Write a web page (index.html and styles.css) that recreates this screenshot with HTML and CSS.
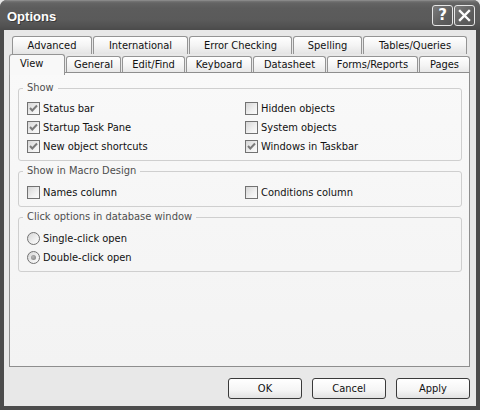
FILE: index.html
```html
<!DOCTYPE html>
<html>
<head>
<meta charset="utf-8">
<title>Options</title>
<link rel="stylesheet" href="styles.css">
</head>
<body>
<div class="window">
  <div class="titlebar">
    <span class="title">Options</span>
    <div class="tbtns">
      <span class="tbtn help">?</span>
      <span class="tbtn close"><svg width="19" height="19" viewBox="0 0 19 19"><path d="M5 5 L14 14 M14 5 L5 14" stroke="#fff" stroke-width="2.4" stroke-linecap="square"/></svg></span>
    </div>
  </div>
  <div class="client">
    <div class="tabs">
      <div class="tabrow row1">
        <div class="tab">Advanced</div>
        <div class="tab">International</div>
        <div class="tab">Error Checking</div>
        <div class="tab">Spelling</div>
        <div class="tab">Tables/Queries</div>
      </div>
      <div class="tabrow row2">
        <div class="tab sel">View</div>
        <div class="tab">General</div>
        <div class="tab">Edit/Find</div>
        <div class="tab">Keyboard</div>
        <div class="tab">Datasheet</div>
        <div class="tab">Forms/Reports</div>
        <div class="tab">Pages</div>
      </div>
    </div>
    <div class="panel">
      <fieldset class="group">
        <legend>Show</legend>
        <div class="cols">
          <div class="opt"><span class="cb checked"><svg width="11" height="11" viewBox="0 0 11 11"><path d="M2 5 L4.3 7.5 L9 2.5" fill="none" stroke="#7a7a7a" stroke-width="2"/></svg></span>Status bar</div>
          <div class="opt"><span class="cb"></span>Hidden objects</div>
          <div class="opt"><span class="cb checked"><svg width="11" height="11" viewBox="0 0 11 11"><path d="M2 5 L4.3 7.5 L9 2.5" fill="none" stroke="#7a7a7a" stroke-width="2"/></svg></span>Startup Task Pane</div>
          <div class="opt"><span class="cb"></span>System objects</div>
          <div class="opt"><span class="cb checked"><svg width="11" height="11" viewBox="0 0 11 11"><path d="M2 5 L4.3 7.5 L9 2.5" fill="none" stroke="#7a7a7a" stroke-width="2"/></svg></span>New object shortcuts</div>
          <div class="opt"><span class="cb checked"><svg width="11" height="11" viewBox="0 0 11 11"><path d="M2 5 L4.3 7.5 L9 2.5" fill="none" stroke="#7a7a7a" stroke-width="2"/></svg></span>Windows in Taskbar</div>
        </div>
      </fieldset>
      <fieldset class="group macro">
        <legend>Show in Macro Design</legend>
        <div class="cols">
          <div class="opt"><span class="cb"></span>Names column</div>
          <div class="opt"><span class="cb"></span>Conditions column</div>
        </div>
      </fieldset>
      <fieldset class="group click">
        <legend>Click options in database window</legend>
        <div class="opt"><span class="rb"></span>Single-click open</div>
        <div class="opt"><span class="rb on"></span>Double-click open</div>
      </fieldset>
    </div>
    <div class="buttons">
      <button class="btn">OK</button>
      <button class="btn">Cancel</button>
      <button class="btn">Apply</button>
    </div>
  </div>
</div>
</body>
</html>
```

FILE: styles.css
```css
html, body {
  margin: 0;
  padding: 0;
  background: #e6e6e6;
}
body {
  font-family: "DejaVu Sans Condensed", "DejaVu Sans", sans-serif;
  font-size: 11px;
  color: #111;
}
.window {
  width: 480px;
  height: 410px;
  box-sizing: border-box;
  background: #4c4c4c;
  border-radius: 7px 7px 0 0;
  padding: 0 4px 4px;
  display: flex;
  flex-direction: column;
}
.titlebar {
  height: 30px;
  flex: none;
  margin: 0 -4px;
  padding: 0 5px 0 7px;
  border-radius: 7px 7px 0 0;
  background: linear-gradient(#9a9a9a 0, #767676 1px, #646464 3px, #5c5c5c 8px, #5a5a5a 20px, #525252 26px, #4a4a4a 30px);
  display: flex;
  align-items: center;
  justify-content: space-between;
}
.title {
  color: #fff;
  font-family: "Liberation Sans", Arial, sans-serif;
  font-weight: bold;
  font-size: 13px;
  padding-top: 2px;
  text-shadow: 1px 1px 0 #3a3a3a;
}
.tbtns {
  display: flex;
  gap: 1px;
  padding-top: 1px;
}
.tbtn {
  width: 21px;
  height: 21px;
  box-sizing: border-box;
  border: 1px solid #e6e6e6;
  border-radius: 3px;
  background: linear-gradient(135deg, #7c7c7c, #5e5e5e 60%, #565656);
  display: flex;
  align-items: center;
  justify-content: center;
  color: #fff;
}
.help {
  font-family: "DejaVu Sans", sans-serif;
  font-weight: bold;
  font-size: 15px;
  line-height: 19px;
}
.client {
  flex: 1;
  background: #e8e8e8;
  display: flex;
  flex-direction: column;
  padding: 6px 6px 7px 5px;
  min-height: 0;
}
.tabs {
  flex: none;
}
.tabrow {
  display: grid;
  column-gap: 1px;
  height: 18px;
}
.row1 {
  margin-left: 3px;
  grid-template-columns: 80px 95px 103px 69px 104px;
}
.row2 {
  grid-template-columns: 56px 55px 63px 66px 73px 91px 51px;
  align-items: end;
}
.tab {
  box-sizing: border-box;
  height: 18px;
  border: 1px solid #949494;
  border-bottom: none;
  border-radius: 3px 3px 0 0;
  background: linear-gradient(#ffffff, #f4f4f4 50%, #e4e4e4);
  text-align: center;
  line-height: 17px;
  white-space: nowrap;
}
.row2 .tab {
  line-height: 16px;
}
.row2 .tab.sel {
  height: 21px;
  margin-bottom: -1px;
  position: relative;
  z-index: 1;
  background: #f8f8f8;
  text-align: left;
  padding-left: 10px;
  line-height: 17px;
}
.panel {
  flex: 1;
  min-height: 0;
  border: 1px solid #8e8e8e;
  background: linear-gradient(#f9f9f9, #f3f3f3);
  padding: 8px 7px 0 8px;
  display: flex;
  flex-direction: column;
  gap: 3px;
}
.group {
  margin: 0;
  padding: 4px 8px 4px 8px;
  border: 1px solid #cfcfcf;
  border-radius: 3px;
  min-width: 0;
}
.group.macro {
  padding-top: 5px;
}
.group.click {
  padding-top: 5px;
}
.group legend {
  padding: 0 4px;
  margin-left: -4px;
  line-height: 14px;
  color: #4e4e4e;
}
.cols {
  display: grid;
  grid-template-columns: 218px 1fr;
}
.opt {
  height: 19px;
  display: flex;
  align-items: center;
  gap: 3px;
  white-space: nowrap;
}
.cb {
  width: 13px;
  height: 13px;
  box-sizing: border-box;
  border: 1px solid #727272;
  background: linear-gradient(135deg, #d6d6d6, #f0f0f0 60%, #fbfbfb);
  display: flex;
  align-items: center;
  justify-content: center;
  flex: none;
}
.rb {
  width: 13px;
  height: 13px;
  box-sizing: border-box;
  border: 1px solid #727272;
  border-radius: 50%;
  background: linear-gradient(135deg, #d6d6d6, #f0f0f0 60%, #fbfbfb);
  display: flex;
  align-items: center;
  justify-content: center;
  flex: none;
}
.rb.on::after {
  content: "";
  width: 5px;
  height: 5px;
  border-radius: 50%;
  background: radial-gradient(circle at 40% 40%, #b8b8b8, #7a7a7a);
}
.buttons {
  flex: none;
  display: flex;
  justify-content: flex-end;
  gap: 10px;
  margin-top: 11px;
}
.btn {
  width: 74px;
  height: 21px;
  box-sizing: border-box;
  border: 1px solid #3a3a3a;
  border-radius: 3px;
  background: linear-gradient(#ffffff, #f5f5f5 60%, #e2e2e2);
  font-family: "DejaVu Sans Condensed", "DejaVu Sans", sans-serif;
  font-size: 11px;
  color: #111;
  padding: 0;
}
```
